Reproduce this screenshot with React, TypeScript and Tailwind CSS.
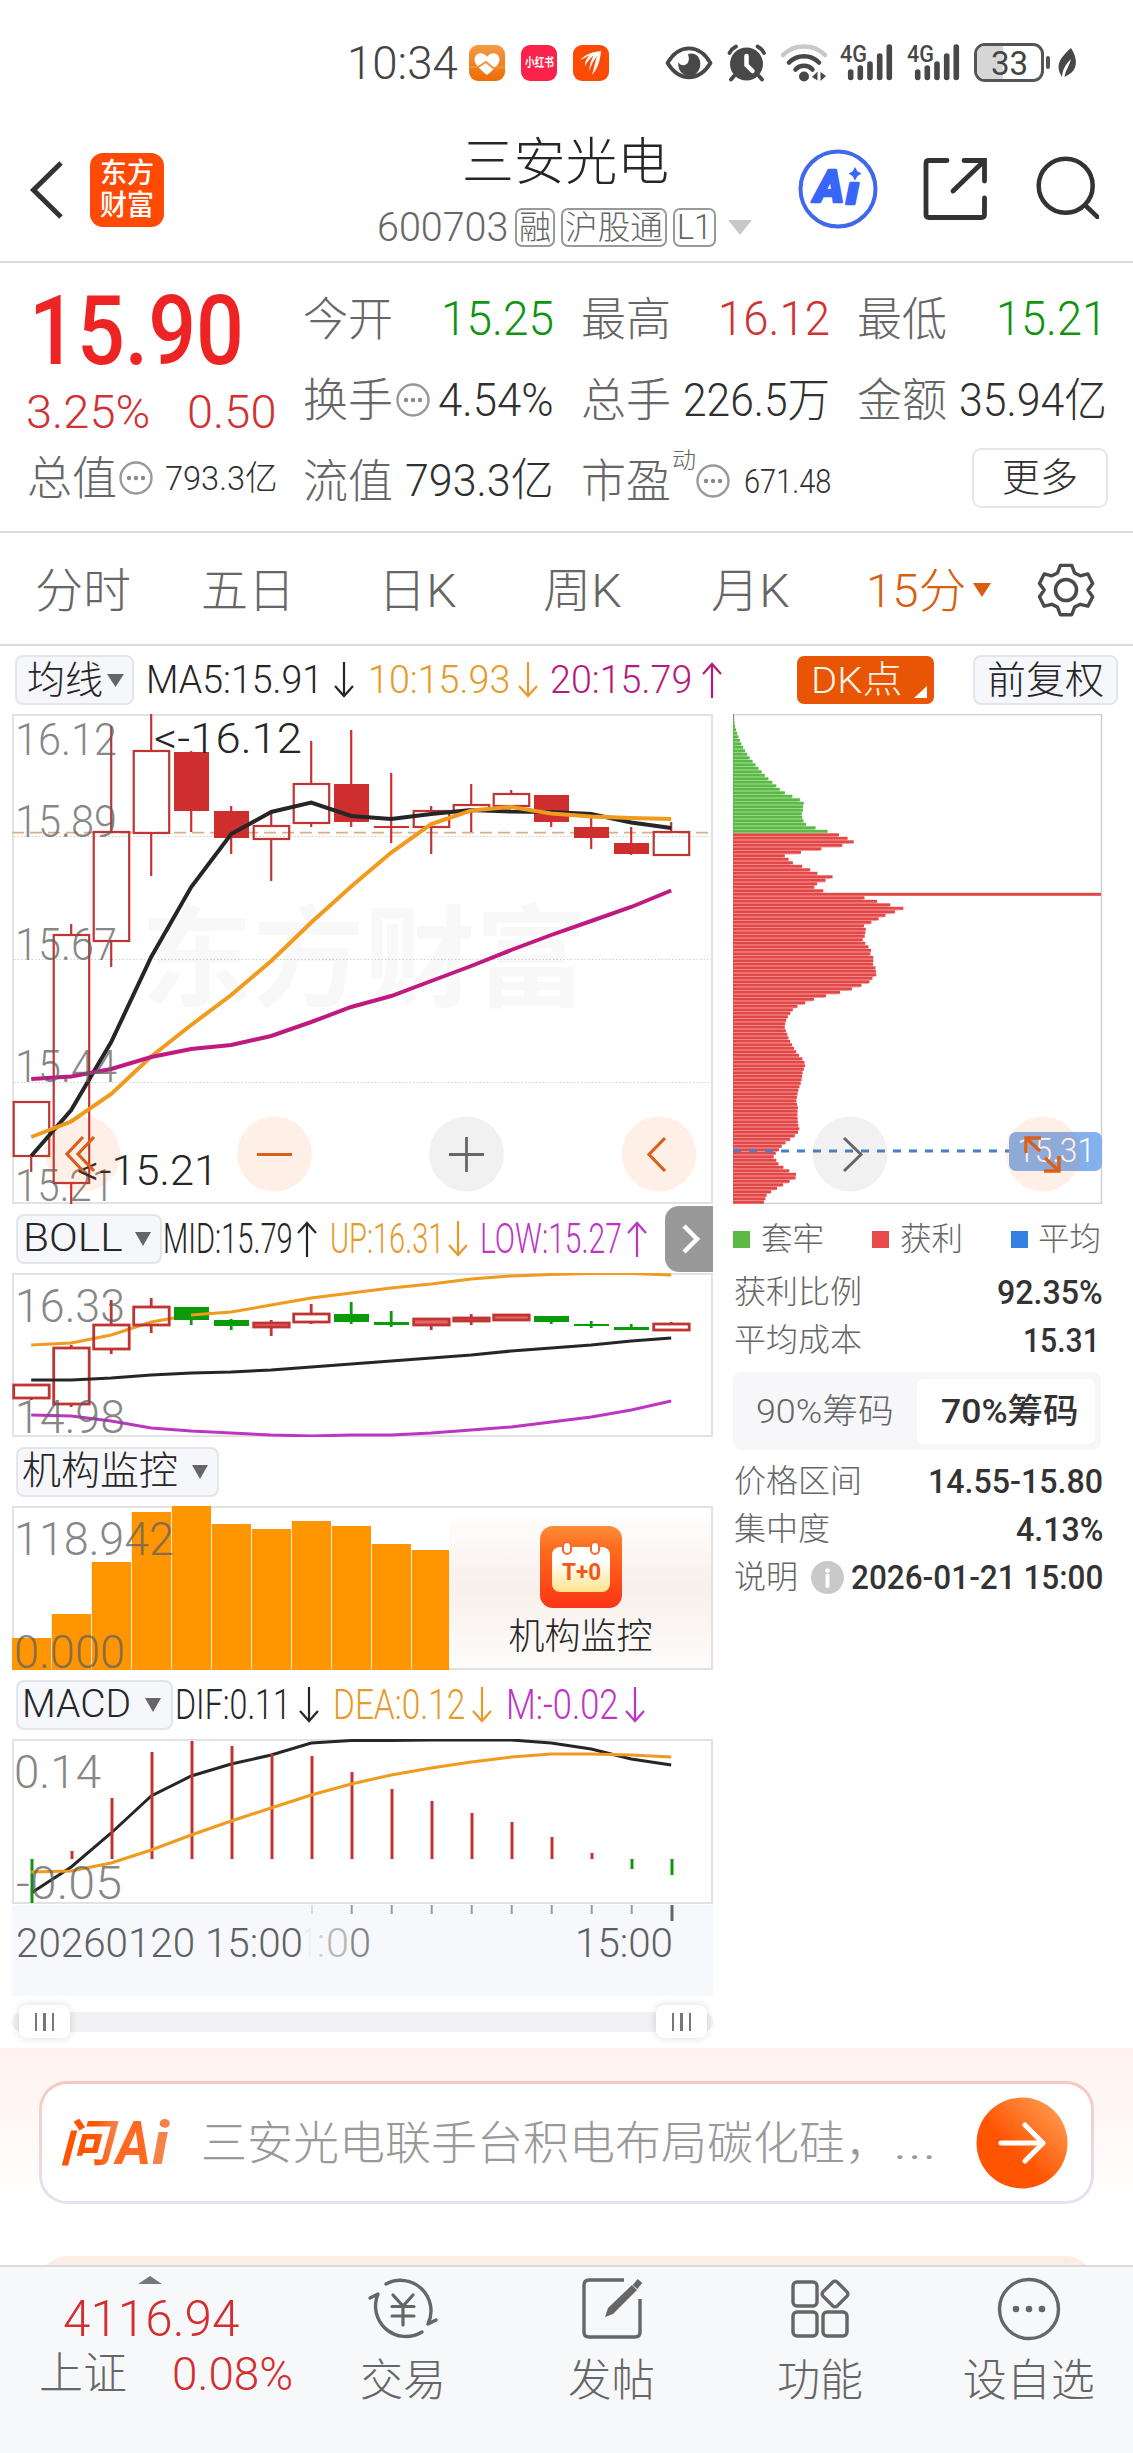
import React, { useLayoutEffect, useRef } from 'react';

const RED = '#cf2e2e';
const GREEN = '#0a9a0a';
const INK = '#262626';
const ORANGE = '#f09a1e';

/* Text condensed or widened to fill the width given in its class name. */
function T({ children, className = '' }: { children: string; className?: string }) {
  const outer = useRef<HTMLSpanElement>(null);
  const inner = useRef<HTMLSpanElement>(null);
  useLayoutEffect(() => {
    if (outer.current && inner.current) {
      const k = outer.current.clientWidth / inner.current.offsetWidth;
      inner.current.style.transform = `scaleX(${k})`;
    }
  }, []);
  return (
    <span ref={outer} className={`block shrink-0 leading-none whitespace-nowrap ${className}`}>
      <span ref={inner} className="inline-block origin-left">{children}</span>
    </span>
  );
}

function Caret({ className }: { className: string }) {
  return (
    <svg viewBox="0 0 16 14" preserveAspectRatio="none" className={`shrink-0 ${className}`}>
      <path d="M0 0H16L8 14Z" fill="currentColor" />
    </svg>
  );
}

function Arrow({ up = false, className = '' }: { up?: boolean; className?: string }) {
  return (
    <svg viewBox="0 0 22 36" className={`h-[36px] w-[22px] shrink-0 ${className}`} fill="none" stroke="currentColor" strokeWidth="2.2">
      <path d={up ? 'M11 36V2M2 12L11 2L20 12' : 'M11 0V34M2 24L11 34L20 24'} />
    </svg>
  );
}

function Dots({ className = '' }: { className?: string }) {
  return (
    <svg viewBox="0 0 34 34" className={`size-[34px] shrink-0 ${className}`}>
      <circle cx="17" cy="17" r="15.500" fill="none" stroke="#999" strokeWidth="2.4" />
      <circle cx="10" cy="17" r="2.200" fill="#888" />
      <circle cx="17" cy="17" r="2.200" fill="#888" />
      <circle cx="24" cy="17" r="2.200" fill="#888" />
    </svg>
  );
}

function Signal() {
  return (
    <svg viewBox="0 0 53 38" className="h-[38px] w-[53px] shrink-0 overflow-visible">
      <text x="0" y="18" fontSize="24" fontWeight="500" textLength="27" lengthAdjust="spacingAndGlyphs" fill="#484848">4G</text>
      <g stroke="#484848" strokeWidth="5.600" strokeLinecap="round">
        <path d="M10.700 28V33.500M20.300 24V33.500M30 20V33.500M39.700 12V33.500M49.300 3V33.500" />
      </g>
    </svg>
  );
}

function StatusBar() {
  return (
    <div className="flex h-[125px] items-center text-[#444]">
      <T className="ml-[347px] w-[111px] text-[46px]">10:34</T>
      <svg viewBox="0 0 36 36" className="ml-[11px] size-[36px] shrink-0">
        <defs>
          <linearGradient id="hg" x1="0" y1="0" x2="0" y2="1"><stop offset="0" stopColor="#f29a45" /><stop offset="1" stopColor="#ee6c05" /></linearGradient>
        </defs>
        <rect width="36" height="36" rx="9" fill="url(#hg)" />
        <path d="M18 30C8 22 4 17 6 12C8 7 15 7 18 12C21 7 28 7 30 12C32 17 28 22 18 30Z" fill="#fff" />
        <path d="M0 22H9L17 17L24 23L36 22" fill="none" stroke="#f3913a" strokeWidth="2" />
      </svg>
      <div className="ml-[16px] flex size-[36px] shrink-0 items-center justify-center rounded-[9px] bg-[#fb2349] text-white">
        <T className="w-[29px] text-[12px] font-bold">小红书</T>
      </div>
      <svg viewBox="0 0 36 36" className="ml-[16px] size-[36px] shrink-0">
        <rect width="36" height="36" rx="9" fill="#fd4a05" />
        <path d="M7 15C13 9 19 7 28 6C27 16 25 23 19 30C21 23 22 17 24 11C20 16 18 21 16 26C17 19 18 15 21 10C17 13 14 17 12 21C12 17 13 14 17 10C13 12 10 14 7 15Z" fill="#fff" />
      </svg>
      <svg viewBox="0 0 48 36" className="ml-[56px] h-[36px] w-[48px] shrink-0">
        <path d="M2.500 18C14 -1.500 34 -1.500 45.500 18C34 37 14 37 2.500 18Z" fill="none" stroke="#484848" strokeWidth="3.800" strokeLinejoin="round" />
        <path d="M23 9C36 5 40 24 29 30C20 33 12 27 13.500 17C16 23 27 21 23 9Z" fill="#484848" />
      </svg>
      <svg viewBox="0 0 40 38" className="ml-[14px] h-[38px] w-[40px] shrink-0">
        <circle cx="19.500" cy="20" r="16.500" fill="#484848" />
        <path d="M2.500 9C4 6 6 4 9 2.500M37 9C35.500 6 33.500 4 30.500 2.500M7 32L4 35.500M32 32L35 35.500" stroke="#484848" strokeWidth="3.800" strokeLinecap="round" fill="none" />
        <path d="M19.500 12V21L25.500 27" fill="none" stroke="#fff" strokeWidth="4.500" strokeLinecap="round" />
      </svg>
      <svg viewBox="0 0 46 38" className="ml-[14px] h-[38px] w-[46px] shrink-0" fill="none" strokeWidth="4.500" strokeLinecap="round">
        <path d="M2 11C13 -0.500 33 -0.500 44 11" stroke="#c9c9c9" />
        <path d="M8 18.500C16 10 30 10 38 18.500" stroke="#484848" />
        <path d="M14.500 25.500C19 20.500 27 20.500 31.500 25.500" stroke="#484848" />
        <circle cx="23" cy="32.500" r="5" fill="#484848" />
        <path d="M31 33L36.500 27.500V36.500ZM45 32L39.500 37V28Z" fill="#484848" />
      </svg>
      <div className="ml-[13px] flex gap-[14px]"><Signal /><Signal /></div>
      <div className="relative ml-[14px] flex h-[39px] w-[70px] shrink-0 items-center justify-center overflow-hidden rounded-[11px] border-[3px] border-[#555]">
        <div className="absolute inset-y-0 left-0 w-[26px] bg-[#d6d6d6]" />
        <T className="relative w-[37px] text-[34px] font-normal">33</T>
      </div>
      <div className="ml-[2px] h-[13px] w-[4px] shrink-0 rounded-full bg-[#555]" />
      <svg viewBox="0 0 20 32" className="ml-[7px] h-[32px] w-[20px] shrink-0">
        <path d="M14 1C20 10 22 22 11 28L7.500 30C8.500 23 12 20 14 12C9 17 5.500 22 5 30C-3 18 4 10 14 1Z" fill="#484848" />
      </svg>
    </div>
  );
}

function Header() {
  return (
    <div className="flex h-[138px] items-start border-b-2 border-[#dcdcdc] text-[#262626]">
      <svg viewBox="0 0 34 60" className="mt-[35px] ml-[29px] h-[60px] w-[34px] shrink-0">
        <path d="M32 3L4.500 30L32 57" fill="none" stroke="#333" strokeWidth="5" />
      </svg>
      <div className="mt-[28px] ml-[27px] flex size-[74px] shrink-0 flex-col items-center justify-center gap-[4px] rounded-[13px] bg-[#ff4a05] text-white">
        <T className="w-[54px] text-[28px] font-medium">东方</T>
        <T className="w-[54px] text-[28px] font-medium">财富</T>
      </div>
      <div className="mt-[12px] ml-[213px] flex w-[378px] shrink-0 flex-col">
        <T className="ml-[85px] w-[207px] text-[51px]">三安光电</T>
        <div className="mt-[19px] flex h-[40px] items-center text-[#666]">
          <T className="w-[131px] text-[41px]">600703</T>
          <span className="ml-[7px] flex h-[39px] w-[40px] shrink-0 items-center justify-center rounded-[7px] border-2 border-[#999]"><T className="w-[32px] text-[33px]">融</T></span>
          <span className="ml-[6px] flex h-[39px] w-[106px] shrink-0 items-center justify-center rounded-[7px] border-2 border-[#999]"><T className="w-[98px] text-[33px]">沪股通</T></span>
          <span className="ml-[6px] flex h-[39px] w-[43px] shrink-0 items-center justify-center rounded-[7px] border-2 border-[#999]"><T className="w-[35px] text-[35px]">L1</T></span>
          <Caret className="ml-[12px] h-[15px] w-[24px] text-[#c8c8c8]" />
        </div>
      </div>
      <svg viewBox="0 0 80 80" className="mt-[24px] ml-[43px] size-[80px] shrink-0">
        <circle cx="40" cy="40" r="37.500" fill="none" stroke="#3f69ea" strokeWidth="4" />
        <g fill="#3866fb" stroke="#3866fb" strokeWidth="2.400" strokeLinejoin="round" fontWeight="900" fontStyle="italic">
          <text x="16" y="53" fontSize="44" textLength="30" lengthAdjust="spacingAndGlyphs">A</text>
          <text x="48" y="55" fontSize="38" textLength="13" lengthAdjust="spacingAndGlyphs">ı</text>
        </g>
        <path d="M57 18L59.500 22.500L63.500 24.500L59.500 27L57 31.500L54.500 27L50.500 24.500L54.500 22.500Z" fill="#3866fb" />
      </svg>
      <svg viewBox="0 0 64 64" className="mt-[32px] ml-[45px] size-[64px] shrink-0" fill="none" stroke="#333" strokeWidth="4.800" strokeLinecap="round">
        <path d="M24 3.500H6Q3 3.500 3 6.500V57.500Q3 60.500 6 60.500H58.500Q61.500 60.500 61.500 57.500V41" />
        <path d="M41 3.500H61.500V24M60 5L30 34" />
      </svg>
      <svg viewBox="0 0 64 64" className="mt-[30px] ml-[48px] size-[64px] shrink-0" fill="none" stroke="#333" strokeWidth="4.500" strokeLinecap="round">
        <circle cx="30.700" cy="30.700" r="27" />
        <path d="M51 51L62.500 62" />
      </svg>
    </div>
  );
}

const LBL = '-ml-px w-[90px] text-[46px] text-[#666]';

function Quote() {
  return (
    <div className="flex h-[270px] gap-[28px] border-b-2 border-[#dcdcdc] px-[28px] text-[#303030]">
      <div className="flex w-[248px] shrink-0 flex-col">
        <div className="mt-[20px] flex h-[96px] items-center"><T className="ml-[1px] w-[215px] text-[96px] font-medium text-[#ee2424]">15.90</T></div>
        <div className="mt-[8px] flex h-[48px] items-center justify-between text-[#cf3333]">
          <T className="-ml-[2px] w-[124px] text-[47px]">3.25%</T>
          <T className="w-[89px] text-[47px]">0.50</T>
        </div>
        <div className="mt-[19px] flex h-[48px] items-center">
          <T className={LBL}>总值</T><Dots className="ml-[2px]" />
          <T className="ml-[12px] w-[113px] text-[34px]">793.3亿</T>
        </div>
      </div>
      <div className="flex w-[250px] shrink-0 flex-col gap-[32px] pt-[31px]">
        <div className="flex h-[49px] items-center justify-between"><T className={LBL}>今开</T><T className="w-[113px] text-[48px] text-[#109410]">15.25</T></div>
        <div className="flex h-[49px] items-center justify-between"><T className={LBL}>换手</T><Dots className="-ml-[6px]" /><T className="w-[116px] text-[46px]">4.54%</T></div>
        <div className="flex h-[49px] items-center justify-between"><T className={LBL}>流值</T><T className="w-[149px] text-[45px]">793.3亿</T></div>
      </div>
      <div className="flex w-[248px] shrink-0 flex-col gap-[32px] pt-[31px]">
        <div className="flex h-[49px] items-center justify-between"><T className={LBL}>最高</T><T className="w-[112px] text-[48px] text-[#cf3333]">16.12</T></div>
        <div className="flex h-[49px] items-center justify-between"><T className={LBL}>总手</T><T className="w-[147px] text-[46px]">226.5万</T></div>
        <div className="flex h-[49px] items-center">
          <T className={LBL}>市盈</T>
          <T className="-mt-[40px] ml-[1px] w-[24px] text-[23px] text-[#666]">动</T><Dots />
          <T className="ml-[14px] w-[87px] text-[34px]">671.48</T>
        </div>
      </div>
      <div className="flex w-[249px] shrink-0 flex-col pt-[31px]">
        <div className="flex h-[49px] items-center justify-between"><T className={LBL}>最低</T><T className="w-[111px] text-[48px] text-[#109410]">15.21</T></div>
        <div className="mt-[32px] flex h-[49px] items-center justify-between"><T className={LBL}>金额</T><T className="w-[148px] text-[46px]">35.94亿</T></div>
        <div className="mt-[24px] ml-[114px] flex h-[60px] w-[136px] items-center justify-center rounded-[9px] border-2 border-[#e6e6e6]"><T className="w-[76px] text-[39px]">更多</T></div>
      </div>
    </div>
  );
}

function Tabs() {
  return (
    <div className="flex h-[113px] items-center border-b-2 border-[#dcdcdc] pt-[3px] text-[47px] text-[#666]">
      <T className="ml-[35px] w-[96px]">分时</T>
      <T className="ml-[70px] w-[94px]">五日</T>
      <T className="ml-[83px] w-[79px]">日K</T>
      <T className="ml-[86px] w-[79px]">周K</T>
      <T className="ml-[89px] w-[79px]">月K</T>
      <T className="ml-[76px] w-[100px] text-[#d85f12]">15分</T>
      <Caret className="ml-[7px] h-[14px] w-[18px] text-[#d85f12]" />
      <svg viewBox="0 0 58 58" className="ml-[46px] size-[58px]" fill="none" stroke="#4a4a4a" strokeWidth="3.600" strokeLinejoin="round">
        <path d="M23 3H35L38 11L44 14L52 12L57 22L52 29L57 36L52 46L44 44L38 47L35 55H23L20 47L14 44L6 46L1 36L6 29L1 22L6 12L14 14L20 11Z" transform="translate(1.500 1.500) scale(.95)" />
        <circle cx="29" cy="29" r="10.500" />
      </svg>
    </div>
  );
}

const PILL = 'flex h-[50px] shrink-0 items-center rounded-[8px] border-2 border-[#e2e5e9] bg-[#f6f7fa] text-[#262626]';

function MaRow() {
  return (
    <div className="flex h-[68px] items-center text-[39px]">
      <div className={`${PILL} ml-[15px] w-[119px]`}>
        <T className="ml-[10px] w-[76px] text-[38px]">均线</T>
        <Caret className="ml-[4px] h-[13px] w-[17px] text-[#666]" />
      </div>
      <T className="ml-[12px] w-[177px] text-[#262626]">MA5:15.91</T>
      <Arrow className="ml-[10px] text-[#262626]" />
      <T className="ml-[13px] w-[142px] text-[#e69a2b]">10:15.93</T>
      <Arrow className="ml-[7px] text-[#e69a2b]" />
      <T className="ml-[11px] w-[142px] text-[#b8197c]">20:15.79</T>
      <Arrow up className="ml-[9px] text-[#b8197c]" />
      <div className="relative ml-[74px] flex h-[48px] w-[137px] shrink-0 items-center rounded-[7px] bg-[#e85504] text-[#fff3e8]">
        <T className="ml-[14px] w-[92px] text-[37px]">DK点</T>
        <svg viewBox="0 0 13 12" className="absolute right-[7px] bottom-[6px] h-[12px] w-[13px]"><path d="M13 0V12H0Z" fill="#fff" /></svg>
      </div>
      <div className={`${PILL} ml-[39px] w-[145px] justify-center`}><T className="w-[117px] text-[38px]">前复权</T></div>
    </div>
  );
}

const cx = (i: number) => 31.2 + 40 * i;
const line = (ys: number[]) => ys.map((y, i) => `${cx(i)},${y}`).join(' ');

type Candle = { o: number; c: number; h: number; l: number; k: 'h' | 'f' | 'g' | 't' };
const mk = (rows: [number, number, number, number, Candle['k']][]): Candle[] =>
  rows.map(([h, o, c, l, k]) => ({ h, o, c, l, k }));

const MAIN = mk([
  [1102, 1102, 1156, 1172, 'h'], [924, 935, 1183, 1204, 'h'], [726, 832, 941, 967, 'h'], [714, 751, 833, 876, 'h'],
  [751, 752, 811, 832, 'f'], [806, 811, 838, 854, 'f'], [813, 826, 839, 881, 'h'], [741, 784, 823, 827, 'h'],
  [730, 784, 822, 827, 'f'], [773, 826, 828, 843, 'f'], [806, 811, 827, 854, 'h'], [784, 805, 811, 832, 'h'],
  [790, 794, 806, 806, 'h'], [795, 795, 822, 827, 'f'], [818, 827, 838, 849, 'f'], [827, 843, 854, 855, 'f'],
  [822, 832, 855, 855, 'h'],
]);
const BOLL = mk([
  [1385, 1385, 1398, 1400, 'h'], [1345, 1348, 1404, 1407, 'h'], [1300, 1325, 1349, 1354, 'h'], [1298, 1307, 1325, 1333, 'h'],
  [1307, 1307, 1320, 1325, 'g'], [1319, 1320, 1326, 1330, 'g'], [1320, 1323, 1327, 1336, 't'], [1304, 1314, 1322, 1324, 'h'],
  [1302, 1314, 1322, 1324, 'g'], [1311, 1322, 1325, 1327, 'g'], [1319, 1319, 1325, 1330, 't'], [1314, 1318, 1321, 1325, 't'],
  [1315, 1315, 1320, 1320, 't'], [1316, 1316, 1322, 1324, 'g'], [1321, 1324, 1326, 1328, 'g'], [1324, 1327, 1330, 1330, 'g'],
  [1322, 1324, 1330, 1330, 'h'],
]);

function Candles({ data, sw = 2.2 }: { data: Candle[]; sw?: number }) {
  return (
    <>
      {data.map((d, i) => {
        const col = d.k === 'g' ? GREEN : d.k === 'f' ? RED : '#c03434';
        const hollow = d.k === 'h' || d.k === 't';
        return (
          <g key={i} stroke={col} strokeWidth={sw}>
            <path d={`M${cx(i)} ${d.h}V${d.o}M${cx(i)} ${d.c}V${d.l}`} />
            {hollow ? (
              <rect x={cx(i) - 17.5} y={d.o} width="35.500" height={d.c - d.o} fill={d.k === 't' ? '#e56464' : 'none'} />
            ) : (
              <rect x={cx(i) - 17.2} y={d.o} width="35" height={d.c - d.o} fill={col} stroke="none" />
            )}
          </g>
        );
      })}
    </>
  );
}

function Label({ x, y, w, s = 44, fill = '#606060', o = 0.75, children }: { x: number; y: number; w: number; s?: number; fill?: string; o?: number; children: string }) {
  return <text x={x} y={y} fontSize={s} textLength={w} lengthAdjust="spacingAndGlyphs" fill={fill} fillOpacity={o} fontWeight="300">{children}</text>;
}

function Frame({ y, h }: { y: number; h: number }) {
  return <rect x="13" y={y + 1} width="699" height={h - 2} fill="none" stroke="#e2e2e2" strokeWidth="2" />;
}

function MainChart() {
  return (
    <svg viewBox="12 714 701 490" className="block h-[490px] w-[701px]">
      <text x="141" y="998" fontSize="110" fontWeight="700" textLength="446" lengthAdjust="spacingAndGlyphs" fill="#f8f8f8">东方财富</text>
      <Frame y={714} h={490} />
      <path d="M14 836.500H711M14 959.500H711M14 1082.500H711" stroke="#cfcfcf" strokeWidth="1.200" strokeDasharray="1.500 2" />
      <path d="M12 832.700H708" stroke="#d9ae84" strokeWidth="1.800" strokeDasharray="12 6" />
      <Candles data={MAIN} />
      <g fill="none" strokeWidth="4">
        <polyline stroke={INK} points={line([1156, 1110, 1042, 957, 887, 834, 812, 802.5, 816, 819, 814, 810, 811.5, 812, 814, 822.5, 828])} />
        <polyline stroke={ORANGE} points={line([1137, 1121.5, 1094, 1056.5, 1025, 995, 961, 922.5, 886.5, 852.5, 824, 810.5, 807, 813.5, 816.5, 818, 819])} />
        <polyline stroke="#c01a80" points={line([1079, 1076.5, 1069, 1057, 1049, 1045, 1036, 1022, 1007, 996, 981, 966, 950, 935, 921, 907, 890.5])} />
      </g>
      <Label x={15} y={755} w={102}>16.12</Label>
      <Label x={15} y={837} w={102}>15.89</Label>
      <Label x={15} y={960} w={102}>15.67</Label>
      <Label x={15} y={1082} w={102}>15.44</Label>
      <Label x={15} y={1201} w={99}>15.21</Label>
      <Label x={154} y={753} w={148} s={43} fill={INK} o={1}>&lt;-16.12</Label>
      <Label x={77} y={1185} w={141} s={43} fill={INK} o={1}>&lt;-15.21</Label>
      <g fill="#ff6a10" fillOpacity=".1">
        <circle cx="83" cy="1154" r="37.500" /><circle cx="274.500" cy="1154" r="37.500" /><circle cx="659" cy="1154" r="37.500" />
      </g>
      <circle cx="466.500" cy="1154" r="37.500" fill="#777" fillOpacity=".1" />
      <g fill="none" stroke="#d95f1a" strokeWidth="3.200">
        <path d="M83 1137L67 1154L83 1171M94 1137L78 1154L94 1171" />
        <path d="M257 1154.500H292" />
        <path d="M665 1138L649 1154.500L665 1171" />
      </g>
      <path d="M449 1154.500H484M466.500 1137V1172" stroke="#666" strokeWidth="2.800" />
    </svg>
  );
}

/* Cost distribution outline, as [row position, right edge] pairs. */
const CHIPS: [number, number][] = [
  [201, 102], [230, 105], [258, 114], [286, 127], [315, 146], [343, 172], [371, 200], [400, 236], [410, 246], [419, 268], [429, 291],
  [438, 315], [447, 309], [457, 312], [466, 307], [476, 306], [487, 311], [497, 313], [506, 338], [516, 376], [526, 414], [536, 441],
  [545, 467], [555, 434], [564, 374], [574, 309], [583, 254], [592, 265], [602, 276], [611, 303], [621, 330], [630, 344], [640, 401],
  [649, 382], [659, 354], [668, 340], [678, 368], [688, 400], [697, 491], [707, 531], [717, 573], [727, 614], [736, 585], [745, 558],
  [755, 536], [765, 513], [774, 492], [784, 499], [803, 495], [812, 489], [822, 498], [831, 507], [841, 515], [850, 512], [860, 522],
  [879, 520], [888, 528], [908, 530], [917, 516], [928, 507], [937, 477], [947, 448], [956, 410], [965, 369], [975, 333], [985, 309],
  [995, 284], [1005, 276], [1014, 269], [1024, 261], [1038, 257], [1050, 255], [1062, 261], [1080, 268], [1100, 280], [1119, 293],
  [1129, 304], [1138, 313], [1150, 317], [1170, 309], [1195, 305], [1215, 297], [1235, 292], [1250, 290], [1265, 295], [1280, 293],
  [1310, 295], [1322, 299], [1331, 296], [1341, 286], [1350, 273], [1360, 258], [1369, 247], [1379, 238], [1390, 227], [1397, 221],
  [1406, 229], [1416, 235], [1426, 250], [1436, 269], [1446, 290], [1455, 288], [1465, 269], [1474, 250], [1484, 231], [1494, 212],
  [1503, 200], [1513, 197], [1530, 188],
];

function chipWidth(row: number) {
  if (row === 51) return 368;
  const p = 201 + 9.464 * (row + 0.5);
  const j = CHIPS.findIndex((c) => c[0] >= p);
  if (j < 1) return (CHIPS[0][1] - 100) / 3;
  const [a, b] = [CHIPS[j - 1], CHIPS[j]];
  return (a[1] + ((b[1] - a[1]) * (p - a[0])) / (b[0] - a[0]) - 100) / 3;
}

function ChipChart() {
  return (
    <svg viewBox="733 714 370 490" className="block h-[490px] w-[370px]">
      <rect x="733.500" y="714.500" width="368" height="489" fill="none" stroke="#cfcfcf" strokeWidth="1.500" />
      <rect x="733" y="714" width="1" height="119" fill="#5ab946" />
      {Array.from({ length: 140 }, (_, i) => {
        const w = chipWidth(i);
        const green = i < 34;
        return (
          <g key={i}>
            <rect x="733" y={714.3 + 3.5 * i} width={w} height="3" fill={green ? '#5cb948' : '#e24848'} />
            {i !== 51 && <rect x="733" y={717.2 + 3.5 * i} width={Math.max(w - 2, 0)} height=".7" fill={green ? '#8fdc80' : '#ff8484'} />}
          </g>
        );
      })}
      <path d="M733 1151H1009" stroke="#4382c6" strokeWidth="3.200" strokeDasharray="8 8" />
      <circle cx="850" cy="1154" r="37.500" fill="#777" fillOpacity=".1" />
      <path d="M844 1138L861 1154.500L844 1171" fill="none" stroke="#666" strokeWidth="3" />
      <rect x="1009" y="1132" width="93" height="39" rx="7" fill="#82b1ee" />
      <text x="1017" y="1162" fontSize="34" textLength="78" lengthAdjust="spacingAndGlyphs" fill="#fff" fontWeight="300">15.31</text>
      <circle cx="1043" cy="1154" r="37.500" fill="#ff6a10" fillOpacity=".1" />
      <path d="M1026 1153V1138H1041M1026 1138L1040 1151M1059 1156V1171H1044M1059 1171L1045 1158" fill="none" stroke="#d95f1a" strokeWidth="3.400" />
    </svg>
  );
}

function BollSection() {
  return (
    <>
      <div className="relative flex h-[69px] items-center text-[43px] text-[#262626]">
        <div className={`${PILL} ml-[4px] w-[146px]`}>
          <T className="ml-[5px] w-[99px] text-[39px]">BOLL</T>
          <Caret className="ml-[13px] h-[14px] w-[16px] text-[#666]" />
        </div>
        <T className="ml-[1px] w-[130px]">MID:15.79</T>
        <Arrow up className="ml-[3px]" />
        <T className="ml-[12px] w-[114px] text-[#e69a2b]">UP:16.31</T>
        <Arrow className="ml-[3px] text-[#e69a2b]" />
        <T className="ml-[11px] w-[142px] text-[#bd35c4]">LOW:15.27</T>
        <Arrow up className="ml-[4px] text-[#bd35c4]" />
        <div className="absolute top-[2px] right-0 flex h-[66px] w-[48px] items-center justify-center rounded-l-[14px] bg-[#999]">
          <svg viewBox="0 0 20 30" className="ml-[4px] h-[30px] w-[20px]"><path d="M3 2L16 15L3 28" fill="none" stroke="#fff" strokeWidth="4.500" /></svg>
        </div>
      </div>
      <svg viewBox="12 1273 701 164" className="block h-[164px] w-[701px]">
        <Frame y={1273} h={164} />
        <polyline fill="none" strokeWidth="3" stroke={ORANGE} points={line([1345, 1343, 1335, 1322, 1315, 1312, 1305, 1298, 1293, 1288, 1284, 1279, 1276, 1274.5, 1273.5, 1273.5, 1275])} />
        <Candles data={BOLL} sw={2.8} />
        <g fill="none" strokeWidth="3">
          <polyline stroke={ORANGE} points="191,1315 211,1313.500" />
          <polyline stroke={INK} points={line([1380, 1380, 1378, 1375, 1373, 1372, 1370, 1367, 1364, 1361, 1358, 1355, 1351, 1348, 1345, 1341, 1338])} />
          <polyline stroke="#bd35c4" points={line([1415, 1416, 1421, 1428, 1431, 1433, 1435, 1436, 1435, 1435, 1433, 1430, 1427, 1422, 1417, 1410, 1401])} />
        </g>
        <Label x={15} y={1322} w={110} s={46}>16.33</Label>
        <Label x={15} y={1433} w={110} s={46}>14.98</Label>
      </svg>
    </>
  );
}

const VOL = [1638, 1614, 1562, 1512, 1506, 1524, 1529, 1521, 1526, 1544, 1550];

function MonitorSection() {
  return (
    <>
      <div className="flex h-[69px] items-center">
        <div className={`${PILL} ml-[4px] w-[203px]`}>
          <T className="ml-[4px] w-[156px] text-[39px]">机构监控</T>
          <Caret className="ml-[14px] h-[14px] w-[16px] text-[#666]" />
        </div>
      </div>
      <div className="relative h-[164px]">
        <svg viewBox="12 1506 701 164" className="block h-[164px] w-[701px]">
          <Frame y={1506} h={164} />
          {VOL.map((y, i) => (
            <rect key={i} x={i ? 11.8 + 40 * i : 12} y={y} width={i === 10 ? 37.5 : 39.2} height={1670 - y} fill="#ff9500" />
          ))}
          <Label x={14} y={1555} w={160} s={46}>118.942</Label>
          <Label x={14} y={1668} w={111} s={46}>0.000</Label>
        </svg>
        <div className="absolute top-[2px] right-[2px] flex h-[160px] w-[262px] flex-col items-center bg-gradient-to-b from-white via-[#f8f0ec] to-[#fdfcfb] pl-[1px]">
          <svg viewBox="0 0 82 82" className="mt-[18px] size-[82px]">
            <defs>
              <linearGradient id="tg" x1="0" y1="0" x2="0" y2="1"><stop offset="0" stopColor="#fe8c38" /><stop offset=".3" stopColor="#ff6a1c" /><stop offset="1" stopColor="#fb3416" /></linearGradient>
              <linearGradient id="tc" x1="0" y1="0" x2="0" y2="1"><stop offset=".3" stopColor="#fff" /><stop offset="1" stopColor="#ffe48e" /></linearGradient>
            </defs>
            <rect width="82" height="82" rx="13" fill="url(#tg)" />
            <rect x="12" y="21" width="58" height="45" rx="8" fill="url(#tc)" />
            <rect x="23" y="16" width="8" height="12" rx="4" fill="#fff" stroke="#f9682a" strokeWidth="2" />
            <rect x="51" y="16" width="8" height="12" rx="4" fill="#fff" stroke="#f9682a" strokeWidth="2" />
            <text x="22" y="54" fontSize="23" fontWeight="700" textLength="39" lengthAdjust="spacingAndGlyphs" fill="#f0581c">T+0</text>
          </svg>
          <T className="mt-[11px] w-[144px] text-[36px] text-[#262626]">机构监控</T>
        </div>
      </div>
    </>
  );
}

const MACD_TOP = [1903, 1851, 1798, 1752, 1741, 1746, 1754, 1756, 1772, 1789, 1801, 1813, 1822, 1837, 1853, 1869, 1875];

function Thumb({ className }: { className: string }) {
  return (
    <div className={`absolute -top-[7px] flex h-[33px] w-[51px] items-center justify-center gap-[6px] rounded-[8px] bg-white shadow-[0_0_8px_rgba(0,0,0,0.14)] ${className}`}>
      <i className="h-[18px] w-[2.500px] bg-[#777]" /><i className="h-[18px] w-[2.500px] bg-[#777]" /><i className="h-[18px] w-[2.500px] bg-[#777]" />
    </div>
  );
}

function MacdSection() {
  return (
    <>
      <div className="flex h-[69px] items-center text-[43px] text-[#262626]">
        <div className={`${PILL} ml-[4px] w-[157px]`}>
          <T className="ml-[4px] w-[109px] text-[39px]">MACD</T>
          <Caret className="ml-[14px] h-[14px] w-[16px] text-[#666]" />
        </div>
        <T className="ml-[2px] w-[116px]">DIF:0.11</T>
        <Arrow className="ml-[7px]" />
        <T className="ml-[13px] w-[132px] text-[#e69a2b]">DEA:0.12</T>
        <Arrow className="ml-[6px] text-[#e69a2b]" />
        <T className="ml-[13px] w-[112px] text-[#bd35c4]">M:-0.02</T>
        <Arrow className="ml-[6px] text-[#bd35c4]" />
      </div>
      <svg viewBox="12 1739 701 257" className="block h-[257px] w-[701px]">
        <Frame y={1739} h={165} />
        <polyline fill="none" strokeWidth="3" stroke={INK} points={line([1893, 1867, 1833, 1796, 1776, 1764, 1755, 1743, 1740.5, 1740.5, 1740, 1740, 1740, 1743, 1749, 1759, 1765])} />
        {MACD_TOP.map((y, i) => (
          <path key={i} d={`M${cx(i) + 0.8} 1859V${y}`} stroke={y > 1859 ? '#109410' : '#c03434'} strokeWidth="3" />
        ))}
        <polyline fill="none" strokeWidth="3" stroke={ORANGE} points={line([1872, 1871, 1863, 1850, 1835, 1821, 1808, 1795, 1784, 1775, 1768, 1762, 1757, 1754, 1754, 1755, 1757])} />
        <Label x={14} y={1788} w={87} s={46}>0.14</Label>
        <Label x={16} y={1899} w={106} s={46}>-0.05</Label>
        <rect x="12" y="1905" width="701" height="91" fill="#f7f8fb" />
        <path d="M312 1905V1914" stroke="#ddd" strokeWidth="2" />
        {[8, 9, 10, 11, 12, 13, 14, 15].map((i) => (
          <path key={i} d={`M${cx(i) + 0.5} 1905V1914`} stroke="#999" strokeWidth="2" />
        ))}
        <path d="M672 1905V1921" stroke="#666" strokeWidth="3" />
        <Label x={16} y={1957} w={287} s={40} o={1}>20260120 15:00</Label>
        <Label x={303} y={1957} w={12} s={40} fill="#ececf0" o={1}>1</Label>
        <Label x={317} y={1957} w={8} s={40} fill="#d0d0d0" o={1}>:</Label>
        <Label x={326} y={1957} w={23} s={40} fill="#b8b8b8" o={1}>0</Label>
        <Label x={349} y={1957} w={22} s={40} fill="#858585" o={1}>0</Label>
        <Label x={575} y={1957} w={98} s={40} o={1}>15:00</Label>
      </svg>
      <div className="relative mt-[16px] h-[20px] w-[701px] rounded-full bg-[#f1f1f3]">
        <Thumb className="left-[7px]" />
        <Thumb className="right-[6px]" />
      </div>
    </>
  );
}

const STAT = 'flex h-[48px] items-center justify-between pl-[1px]';
const NUM = 'text-[34px] font-medium text-[#333]';

function ChipPanel() {
  return (
    <div className="ml-[20px] flex w-[370px] shrink-0 flex-col text-[32px] text-[#666]">
      <ChipChart />
      <div className="mt-[10px] flex h-[50px] items-center justify-between pr-[2px]">
        <span className="flex items-center gap-[11px]"><i className="size-[17px] bg-[#5cb946]" /><T className="w-[63px]">套牢</T></span>
        <span className="flex items-center gap-[11px]"><i className="size-[17px] bg-[#e84a4a]" /><T className="w-[63px]">获利</T></span>
        <span className="flex items-center gap-[10px]"><i className="size-[17px] bg-[#3380e4]" /><T className="w-[63px]">平均</T></span>
      </div>
      <div className={`${STAT} mt-[4px]`}><T className="w-[128px]">获利比例</T><T className={`${NUM} w-[106px]`}>92.35%</T></div>
      <div className={`${STAT} pr-[3px]`}><T className="w-[128px]">平均成本</T><T className={`${NUM} w-[77px]`}>15.31</T></div>
      <div className="mt-[8px] flex h-[78px] w-[368px] items-center rounded-[8px] bg-[#f7f7fa] p-[6px] text-[34px]">
        <T className="ml-[17px] w-[138px]">90%筹码</T>
        <div className="ml-[23px] flex h-[65px] w-[178px] items-center rounded-[7px] bg-white pl-[24px] text-[#333]"><T className="w-[138px] font-medium">70%筹码</T></div>
      </div>
      <div className={`${STAT} mt-[7px]`}><T className="w-[128px]">价格区间</T><T className={`${NUM} w-[175px]`}>14.55-15.80</T></div>
      <div className={STAT}><T className="w-[96px]">集中度</T><T className={`${NUM} w-[87px]`}>4.13%</T></div>
      <div className={STAT}>
        <T className="w-[64px]">说明</T>
        <svg viewBox="0 0 33 33" className="ml-[5px] size-[33px]"><circle cx="16.500" cy="16.500" r="16.500" fill="#c9c9c9" /><circle cx="16.500" cy="9.500" r="2.300" fill="#fff" /><path d="M16.500 14.500V25" stroke="#fff" strokeWidth="4" strokeLinecap="round" /></svg>
        <T className={`${NUM} w-[252px]`}>2026-01-21 15:00</T>
      </div>
    </div>
  );
}

function AskBar() {
  return (
    <div className="flex h-[217px] flex-col overflow-hidden bg-gradient-to-b from-[#fff2ee] to-white to-75% px-[39px] pt-[33px]">
      <div className="shrink-0 rounded-[28px] bg-gradient-to-b from-[#f6c8c0] to-[#dfe5f0] p-[3px]">
        <div className="flex h-[117px] items-center rounded-[25px] bg-white">
          <svg viewBox="0 0 110 50" className="ml-[20px] h-[50px] w-[110px] shrink-0">
            <defs><linearGradient id="ag" x1="0" y1="0" x2="1" y2="0"><stop offset=".6" stopColor="#ff5503" /><stop offset="1" stopColor="#f58a55" /></linearGradient></defs>
            <g fontWeight="700" fontStyle="italic" fill="url(#ag)">
              <text x="-3" y="43" fontSize="50" textLength="53" lengthAdjust="spacingAndGlyphs">问</text>
              <text x="54" y="46" fontSize="60" textLength="35" lengthAdjust="spacingAndGlyphs" fill="#ff6a22">A</text>
              <text x="90" y="46" fontSize="60" textLength="17" lengthAdjust="spacingAndGlyphs" fill="#f58248">i</text>
            </g>
          </svg>
          <T className="ml-[29px] w-[690px] text-[46px] text-[#999]">三安光电联手台积电布局碳化硅，</T>
          <T className="ml-[2px] w-[44px] text-[46px] text-[#999]">...</T>
          <svg viewBox="0 0 92 92" className="ml-[39px] size-[92px] shrink-0">
            <defs><linearGradient id="bg" x1="0.200" y1="0.800" x2="0.900" y2="0.100"><stop offset=".3" stopColor="#ff5503" /><stop offset="1" stopColor="#ff9a4e" /></linearGradient></defs>
            <circle cx="46" cy="46" r="45.500" fill="url(#bg)" />
            <path d="M25 46H67M49 28L67 46L49 64" fill="none" stroke="#fff" strokeWidth="5" strokeLinecap="round" strokeLinejoin="round" />
          </svg>
        </div>
      </div>
      <div className="mt-[52px] h-[40px] shrink-0 rounded-t-[28px] bg-[#fceee6]" />
    </div>
  );
}

function NavItem({ label, w, children }: { label: string; w: string; children: React.ReactNode }) {
  return (
    <div className="flex w-[208.500px] shrink-0 flex-col items-center">
      <svg viewBox="0 0 72 72" className="mt-[6px] size-[72px]" fill="none" stroke="#666" strokeWidth="3.400">{children}</svg>
      <T className={`mt-[14px] text-[44px] ${w}`}>{label}</T>
    </div>
  );
}

function BottomNav() {
  return (
    <div className="flex h-[188px] border-t-2 border-[#d9dadc] bg-[#f7f8fa] text-[#666]">
      <div className="flex w-[299px] shrink-0 flex-col">
        <Caret className="mt-[9px] ml-[138px] h-[8px] w-[24px] rotate-180 text-[#777]" />
        <T className="mt-[10px] ml-[63px] w-[176px] text-[50px] text-[#d23030]">4116.94</T>
        <div className="mt-[6px] flex items-center">
          <T className="ml-[39px] w-[88px] text-[44px]">上证</T>
          <T className="ml-[45px] w-[121px] text-[47px] text-[#d23030]">0.08%</T>
        </div>
      </div>
      <NavItem label="交易" w="w-[86px]">
        <g strokeLinecap="round">
          <path d="M19 11A30.500 30.500 0 0 1 61 51L69 47" strokeLinejoin="round" />
          <path d="M55 59A30.500 30.500 0 0 1 11 21L3 25" strokeLinejoin="round" />
          <path d="M26 22L36 33L46 22M36 33V52M25 33.500H47M25 43H47" strokeWidth="3.200" />
        </g>
      </NavItem>
      <NavItem label="发帖" w="w-[87px]">
        <path d="M48 7H13Q8 7 8 12V59Q8 64 13 64H59Q64 64 64 59V26" />
        <path d="M29 44L32 35L56 12L61 17L37 41Z" fill="#666" stroke="none" />
        <path d="M59 14L64 8" strokeWidth="6" />
      </NavItem>
      <NavItem label="功能" w="w-[86px]">
        <rect x="9" y="9" width="24" height="24" rx="4" /><rect x="9" y="39" width="24" height="24" rx="4" /><rect x="39" y="39" width="24" height="24" rx="4" />
        <rect x="41" y="11" width="20" height="20" rx="3" transform="rotate(45 51 21)" />
      </NavItem>
      <NavItem label="设自选" w="w-[132px]">
        <circle cx="36" cy="36" r="29.500" />
        <g fill="#666" stroke="none"><circle cx="23" cy="36" r="3.300" /><circle cx="36" cy="36" r="3.300" /><circle cx="49" cy="36" r="3.300" /></g>
      </NavItem>
    </div>
  );
}

export default function App() {
  return (
    <div className="w-[1133px] overflow-hidden bg-white font-['Roboto','Noto_Sans_CJK_SC',sans-serif] font-light">
      <StatusBar />
      <Header />
      <Quote />
      <Tabs />
      <MaRow />
      <div className="flex h-[1334px] pl-[12px]">
        <div className="flex w-[701px] shrink-0 flex-col">
          <MainChart />
          <BollSection />
          <MonitorSection />
          <MacdSection />
        </div>
        <ChipPanel />
      </div>
      <AskBar />
      <BottomNav />
    </div>
  );
}
